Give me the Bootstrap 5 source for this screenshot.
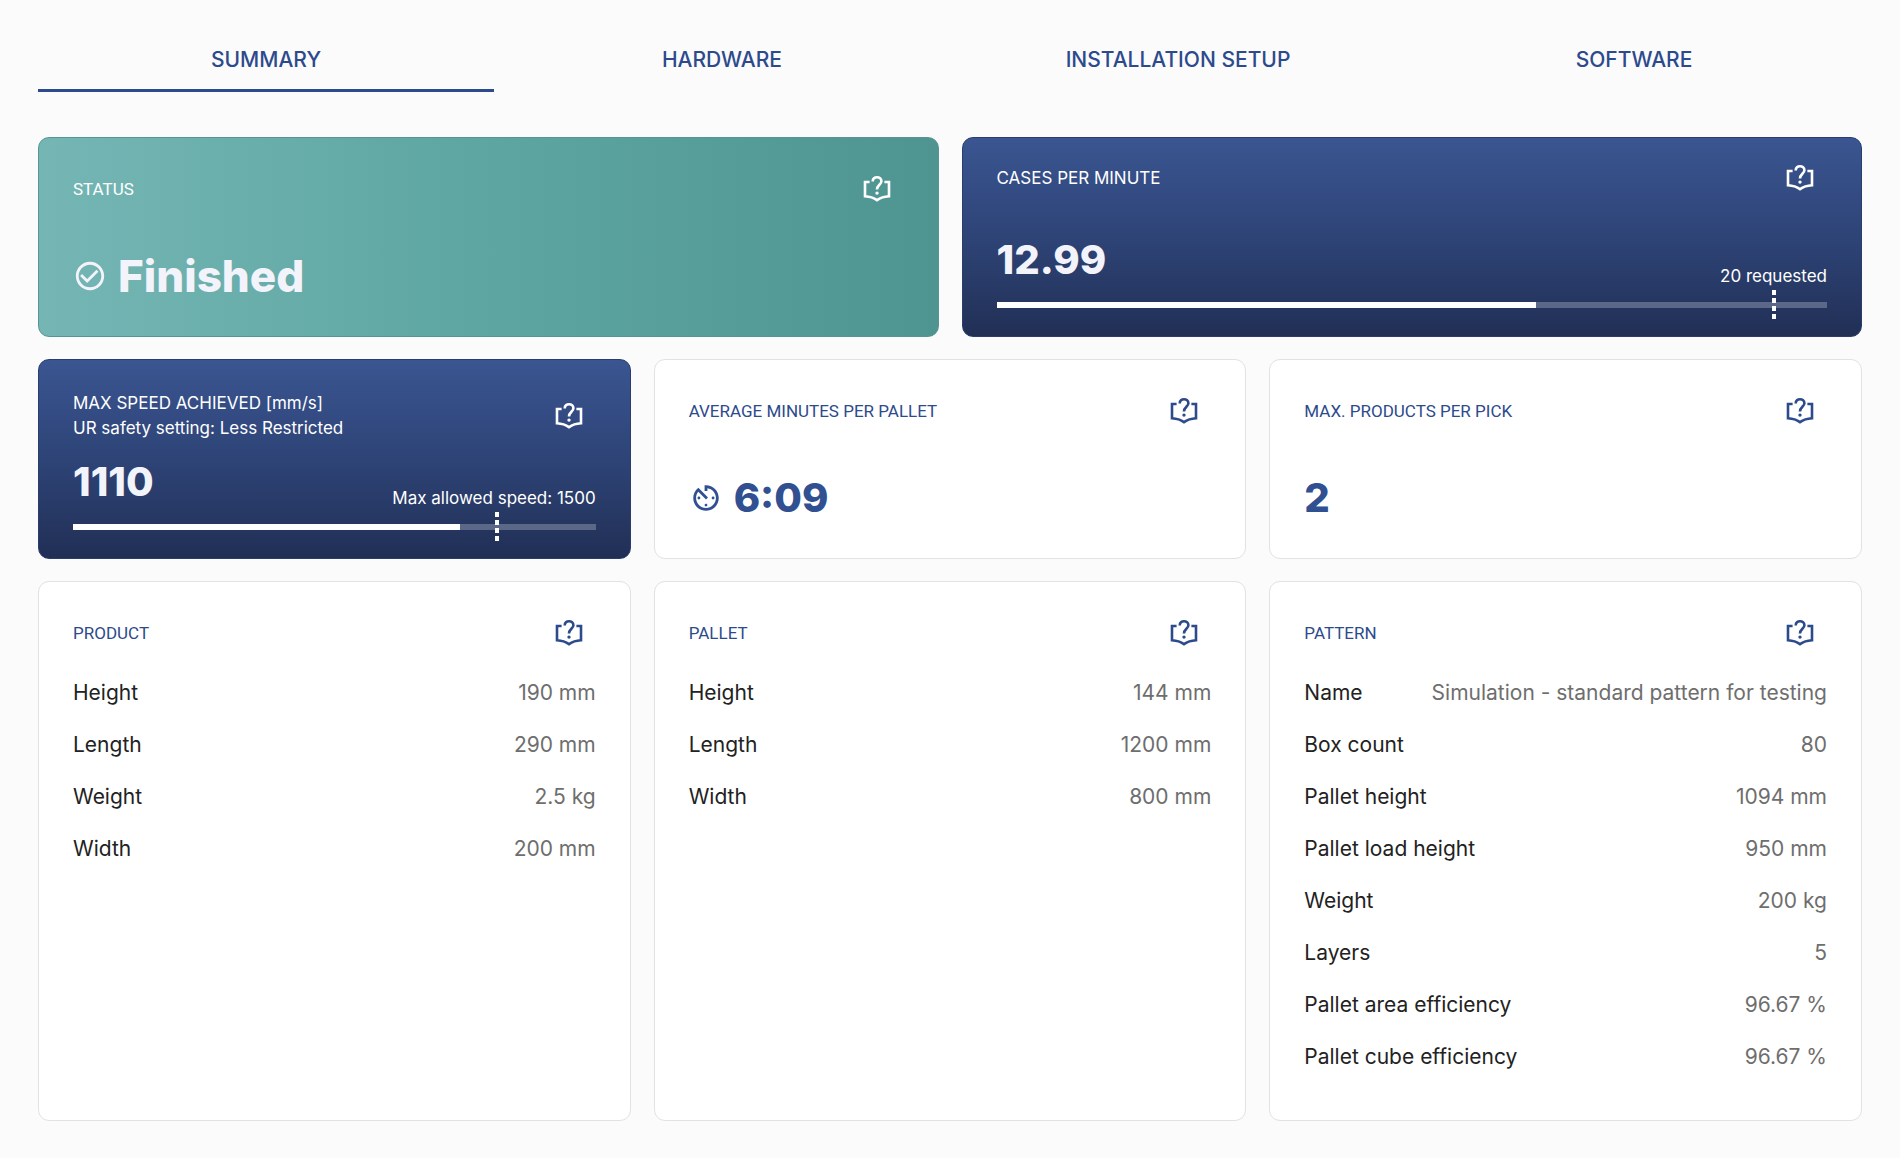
<!DOCTYPE html>
<html lang="en">
<head>
<meta charset="utf-8">
<meta name="viewport" content="width=device-width, initial-scale=1">
<title>Simulation summary</title>
<link href="https://cdn.jsdelivr.net/npm/bootstrap@5.3.0/dist/css/bootstrap.min.css" rel="stylesheet">
<style>
  :root { --navy: #2c4a8c; --line: #e2e2e4; }
  body { background: #fbfbfb; color: #222; font-family: Inter, "Open Sans", sans-serif; font-size: 21px; }
  .page { padding: 24px 38px; }
  .report-tabs { margin-bottom: 45px; }
  .report-tabs .nav-link { height: 68px; padding: 7px 16px 0; border: 0; border-bottom: 3px solid transparent; border-radius: 0; color: var(--navy); font-size: 21px; font-weight: 500; }
  .report-tabs .nav-link.active { border-bottom-color: var(--navy); }
  .tiles { --bs-gutter-x: 23px; --bs-gutter-y: 22px; }
  .tile { border: 1px solid var(--line); border-radius: 11px; padding: 23px 34px 33px; background: #fff; }
  .tile-stat { min-height: 200px; justify-content: space-between; color: var(--navy); }
  .tile-list { min-height: 540px; }
  .tile-done { background: linear-gradient(90deg, #75b6b5, #5fa7a3 45%, #4e9591); border-color: #549792; color: #fff; }
  .tile-gauge { background: linear-gradient(180deg, #3a5591, #2e4477 50%, #212f55); border-color: #2a3d6d; color: #fff; padding: 12px 34px 28px; }
  .tile-gauge.two-line { padding-top: 28px; }
  .tile-head { height: 56px; }
  .tile-name { margin: 0; font-family: Roboto, sans-serif; font-size: 17px; line-height: 25px; font-weight: 400; color: inherit; }
  .tile-list .tile-head { color: var(--navy); }
  .tile-gauge .tile-name, .limit { font-family: Inter, "Open Sans", sans-serif; }
  .limit { font-size: 17px; line-height: 21px; }
  .help-btn { width: 54px; height: 56px; padding: 0; border: 0; color: inherit; background: none; }
  .big-value { gap: 11px; color: #315091; font-size: 40px; line-height: 54px; font-weight: 800; }
  .tile-done .big-value, .tile-gauge .big-value { color: #f3f3fb; }
  .tile-done .big-value { font-size: 44px; }
  .gauge { height: 6px; margin-top: 15px; background: rgba(255,255,255,.25); }
  .gauge-fill { height: 6px; background: #fff; }
  .gauge-mark { position: absolute; top: -12px; width: 4px; height: 29px; margin-left: -2px; background: repeating-linear-gradient(180deg, #fff 0 5px, transparent 5px 8px); }
  .facts { margin: 6px 0 0; }
  .facts > div { height: 52px; }
  .facts dt { font-weight: 400; }
  .facts dd { margin: 0; color: #6e6e6e; }
</style>
</head>
<body>
<svg class="d-none" xmlns="http://www.w3.org/2000/svg">
  <symbol id="help" viewBox="0 0 28 28">
    <g fill="none" stroke="currentColor" stroke-width="2.6">
      <path d="M6.600 7H2v14.200c5 .3 8.800 1.600 12 3.900 3.200-2.300 7-3.600 12-3.900V7h-4.600"/>
      <path d="M9.700 6.400C9.700 3.700 11.600 2.200 14 2.200s4.400 1.500 4.400 4c0 3.300-4.400 4-4.400 8.200"/>
    </g>
    <circle cx="14" cy="18.100" r="1.700" fill="currentColor"/>
  </symbol>
</svg>

<main class="page container-fluid">
  <ul class="nav nav-justified report-tabs">
    <li class="nav-item"><a class="nav-link active d-flex align-items-center justify-content-center" href="#summary" aria-current="page">SUMMARY</a></li>
    <li class="nav-item"><a class="nav-link d-flex align-items-center justify-content-center" href="#hardware">HARDWARE</a></li>
    <li class="nav-item"><a class="nav-link d-flex align-items-center justify-content-center" href="#installation">INSTALLATION SETUP</a></li>
    <li class="nav-item"><a class="nav-link d-flex align-items-center justify-content-center" href="#software">SOFTWARE</a></li>
  </ul>

  <div class="row tiles" id="summary">
    <div class="col-md-6">
      <section class="card tile tile-stat tile-done">
        <div class="tile-head d-flex align-items-center justify-content-between">
          <h2 class="tile-name">STATUS</h2>
          <button type="button" class="btn help-btn" aria-label="Help"><svg width="28" height="28"><use href="#help"/></svg></button>
        </div>
        <div class="big-value d-flex align-items-center">
          <svg width="34" height="34" viewBox="0 0 24 24" fill="currentColor"><path d="M16.590 7.580 10 14.170l-3.590-3.580L5 12l5 5 8-8zM12 2C6.480 2 2 6.480 2 12s4.480 10 10 10 10-4.480 10-10S17.520 2 12 2zm0 18c-4.420 0-8-3.580-8-8s3.580-8 8-8 8 3.580 8 8-3.580 8-8 8z"/></svg>
          <span>Finished</span>
        </div>
      </section>
    </div>

    <div class="col-md-6">
      <section class="card tile tile-stat tile-gauge">
        <div class="tile-head d-flex align-items-center justify-content-between">
          <h2 class="tile-name">CASES PER MINUTE</h2>
          <button type="button" class="btn help-btn" aria-label="Help"><svg width="28" height="28"><use href="#help"/></svg></button>
        </div>
        <div>
          <div class="d-flex align-items-end justify-content-between">
            <span class="big-value">12.99</span><span class="limit">20 requested</span>
          </div>
          <div class="gauge position-relative">
            <div class="gauge-fill" style="width:65%"></div>
            <div class="gauge-mark" style="left:93.6%"></div>
          </div>
        </div>
      </section>
    </div>

    <div class="col-md-4">
      <section class="card tile tile-stat tile-gauge two-line">
        <div class="tile-head d-flex align-items-center justify-content-between">
          <h2 class="tile-name">MAX SPEED ACHIEVED [mm/s]<br>UR safety setting: Less Restricted</h2>
          <button type="button" class="btn help-btn" aria-label="Help"><svg width="28" height="28"><use href="#help"/></svg></button>
        </div>
        <div>
          <div class="d-flex align-items-end justify-content-between">
            <span class="big-value">1110</span><span class="limit">Max allowed speed: 1500</span>
          </div>
          <div class="gauge position-relative">
            <div class="gauge-fill" style="width:74%"></div>
            <div class="gauge-mark" style="left:81.2%"></div>
          </div>
        </div>
      </section>
    </div>

    <div class="col-md-4">
      <section class="card tile tile-stat">
        <div class="tile-head d-flex align-items-center justify-content-between">
          <h2 class="tile-name">AVERAGE MINUTES PER PALLET</h2>
          <button type="button" class="btn help-btn" aria-label="Help"><svg width="28" height="28"><use href="#help"/></svg></button>
        </div>
        <div class="big-value d-flex align-items-center">
          <svg width="34" height="34" viewBox="0 0 24 24" fill="currentColor"><path d="M11 17c0 .55.45 1 1 1s1-.45 1-1-.45-1-1-1-1 .45-1 1zm0-14v4h2V5.080c3.390.490 6 3.390 6 6.920 0 3.870-3.130 7-7 7s-7-3.130-7-7c0-1.680.590-3.220 1.580-4.420L12 13l1.410-1.410-6.800-6.800v.020C4.420 6.450 3 9.050 3 12c0 4.970 4.020 9 9 9 4.970 0 9-4.030 9-9s-4.030-9-9-9h-1zm7 9c0-.55-.45-1-1-1s-1 .45-1 1 .45 1 1 1 1-.45 1-1zM6 12c0 .55.45 1 1 1s1-.45 1-1-.45-1-1-1-1 .45-1 1z"/></svg>
          <span>6:09</span>
        </div>
      </section>
    </div>

    <div class="col-md-4">
      <section class="card tile tile-stat">
        <div class="tile-head d-flex align-items-center justify-content-between">
          <h2 class="tile-name">MAX. PRODUCTS PER PICK</h2>
          <button type="button" class="btn help-btn" aria-label="Help"><svg width="28" height="28"><use href="#help"/></svg></button>
        </div>
        <div class="big-value">2</div>
      </section>
    </div>

    <div class="col-md-4">
      <section class="card tile tile-list h-100">
        <div class="tile-head d-flex align-items-center justify-content-between">
          <h2 class="tile-name">PRODUCT</h2>
          <button type="button" class="btn help-btn" aria-label="Help"><svg width="28" height="28"><use href="#help"/></svg></button>
        </div>
        <dl class="facts">
          <div class="d-flex align-items-center justify-content-between"><dt>Height</dt><dd>190 mm</dd></div>
          <div class="d-flex align-items-center justify-content-between"><dt>Length</dt><dd>290 mm</dd></div>
          <div class="d-flex align-items-center justify-content-between"><dt>Weight</dt><dd>2.5 kg</dd></div>
          <div class="d-flex align-items-center justify-content-between"><dt>Width</dt><dd>200 mm</dd></div>
        </dl>
      </section>
    </div>

    <div class="col-md-4">
      <section class="card tile tile-list h-100">
        <div class="tile-head d-flex align-items-center justify-content-between">
          <h2 class="tile-name">PALLET</h2>
          <button type="button" class="btn help-btn" aria-label="Help"><svg width="28" height="28"><use href="#help"/></svg></button>
        </div>
        <dl class="facts">
          <div class="d-flex align-items-center justify-content-between"><dt>Height</dt><dd>144 mm</dd></div>
          <div class="d-flex align-items-center justify-content-between"><dt>Length</dt><dd>1200 mm</dd></div>
          <div class="d-flex align-items-center justify-content-between"><dt>Width</dt><dd>800 mm</dd></div>
        </dl>
      </section>
    </div>

    <div class="col-md-4">
      <section class="card tile tile-list h-100">
        <div class="tile-head d-flex align-items-center justify-content-between">
          <h2 class="tile-name">PATTERN</h2>
          <button type="button" class="btn help-btn" aria-label="Help"><svg width="28" height="28"><use href="#help"/></svg></button>
        </div>
        <dl class="facts">
          <div class="d-flex align-items-center justify-content-between"><dt>Name</dt><dd>Simulation - standard pattern for testing</dd></div>
          <div class="d-flex align-items-center justify-content-between"><dt>Box count</dt><dd>80</dd></div>
          <div class="d-flex align-items-center justify-content-between"><dt>Pallet height</dt><dd>1094 mm</dd></div>
          <div class="d-flex align-items-center justify-content-between"><dt>Pallet load height</dt><dd>950 mm</dd></div>
          <div class="d-flex align-items-center justify-content-between"><dt>Weight</dt><dd>200 kg</dd></div>
          <div class="d-flex align-items-center justify-content-between"><dt>Layers</dt><dd>5</dd></div>
          <div class="d-flex align-items-center justify-content-between"><dt>Pallet area efficiency</dt><dd>96.67 %</dd></div>
          <div class="d-flex align-items-center justify-content-between"><dt>Pallet cube efficiency</dt><dd>96.67 %</dd></div>
        </dl>
      </section>
    </div>
  </div>
</main>
<script src="https://cdn.jsdelivr.net/npm/bootstrap@5.3.0/dist/js/bootstrap.bundle.min.js"></script>
</body>
</html>
